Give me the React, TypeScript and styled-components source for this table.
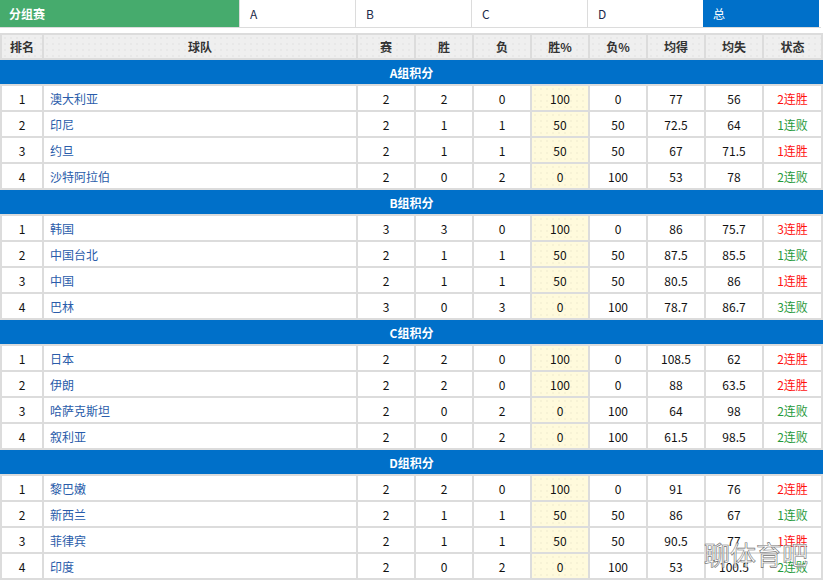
import { Fragment } from "react"
import styled, { createGlobalStyle } from "styled-components"

const GlobalStyle = createGlobalStyle`
  body {
    margin: 0;
    background: #fff;
    font-family: "Microsoft YaHei", "Noto Sans CJK SC", "Noto Sans", sans-serif;
    font-size: 12px;
    color: #222;
  }
`

const Page = styled.div`
  position: relative;
  width: 823px;
  height: 583px;
  overflow: hidden;
`

const TabBar = styled.div`
  display: flex;
  width: 821px;
  height: 27px;
  border-bottom: 1px solid #dcdcdc;
`

const Tab = styled.div<{ $kind?: "green" | "blue" }>`
  display: flex;
  align-items: center;
  box-sizing: border-box;
  width: ${(p) => (p.$kind === "green" ? "239px" : "116px")};
  padding-left: ${(p) => (p.$kind === "green" ? "9px" : "10px")};
  background: ${(p) =>
    p.$kind === "green" ? "#46ab6d" : p.$kind === "blue" ? "#0070c9" : "#fff"};
  color: ${(p) => (p.$kind ? "#fff" : "#1d2b4a")};
  font-weight: ${(p) => (p.$kind === "green" ? "bold" : "normal")};
  border-left: ${(p) => (p.$kind ? "none" : "1px solid #dcdcdc")};
  font-size: 12px;
`

const Table = styled.table`
  margin-top: 5px;
  width: 821px;
  table-layout: fixed;
  border-collapse: collapse;
`

const dots = `radial-gradient(circle, rgba(0,0,0,0.07) 0.6px, transparent 0.8px) 0 0 / 6px 6px`

const HeadCell = styled.th`
  height: 23px;
  padding: 0;
  border: 2px solid #dcdcdc;
  background: ${dots}, #efefef;
  font-weight: bold;
  color: #333;
  font-size: 12px;
  text-align: center;
`

const GroupCell = styled.td`
  height: 24px;
  padding: 0;
  border: 2px solid #dcdcdc;
  border-left-color: #0070c9;
  border-right-color: #0070c9;
  background: #0070c9;
  color: #fff;
  font-weight: bold;
  text-align: center;
`

const Cell = styled.td<{ $hl?: boolean }>`
  height: 24px;
  padding: 0;
  border: 2px solid #dcdcdc;
  text-align: center;
  color: #111;
  background: ${(p) => (p.$hl ? `${dots}, #fffadc` : "#fff")};
`

const TeamCell = styled(Cell)`
  text-align: left;
  padding-left: 6px;
  color: #2a5caa;
`

const Status = styled.span<{ $win: boolean }>`
  color: ${(p) => (p.$win ? "#ff1010" : "#1f9a3c")};
`

const Watermark = styled.div`
  position: absolute;
  left: 704px;
  top: 535px;
  font-size: 26px;
  color: rgba(255, 255, 255, 0.85);
  -webkit-text-stroke: 0.6px #707070;
  font-family: "Noto Sans CJK SC", sans-serif;
  pointer-events: none;
`

type Row = [string, number, number, number, number, number, string, string, string]

const groups: { name: string; rows: Row[] }[] = [
  {
    name: "A组积分",
    rows: [
      ["澳大利亚", 2, 2, 0, 100, 0, "77", "56", "2连胜"],
      ["印尼", 2, 1, 1, 50, 50, "72.5", "64", "1连败"],
      ["约旦", 2, 1, 1, 50, 50, "67", "71.5", "1连胜"],
      ["沙特阿拉伯", 2, 0, 2, 0, 100, "53", "78", "2连败"],
    ],
  },
  {
    name: "B组积分",
    rows: [
      ["韩国", 3, 3, 0, 100, 0, "86", "75.7", "3连胜"],
      ["中国台北", 2, 1, 1, 50, 50, "87.5", "85.5", "1连败"],
      ["中国", 2, 1, 1, 50, 50, "80.5", "86", "1连胜"],
      ["巴林", 3, 0, 3, 0, 100, "78.7", "86.7", "3连败"],
    ],
  },
  {
    name: "C组积分",
    rows: [
      ["日本", 2, 2, 0, 100, 0, "108.5", "62", "2连胜"],
      ["伊朗", 2, 2, 0, 100, 0, "88", "63.5", "2连胜"],
      ["哈萨克斯坦", 2, 0, 2, 0, 100, "64", "98", "2连败"],
      ["叙利亚", 2, 0, 2, 0, 100, "61.5", "98.5", "2连败"],
    ],
  },
  {
    name: "D组积分",
    rows: [
      ["黎巴嫩", 2, 2, 0, 100, 0, "91", "76", "2连胜"],
      ["新西兰", 2, 1, 1, 50, 50, "86", "67", "1连败"],
      ["菲律宾", 2, 1, 1, 50, 50, "90.5", "77", "1连胜"],
      ["印度", 2, 0, 2, 0, 100, "53", "100.5", "2连败"],
    ],
  },
]

const headers = ["排名", "球队", "赛", "胜", "负", "胜%", "负%", "均得", "均失", "状态"]
const widths = [42, 314, 58, 58, 58, 58, 58, 58, 58, 59]

export default function App() {
  return (
    <Page>
      <GlobalStyle />
      <TabBar>
        <Tab $kind="green">分组赛</Tab>
        <Tab>A</Tab>
        <Tab>B</Tab>
        <Tab>C</Tab>
        <Tab>D</Tab>
        <Tab $kind="blue">总</Tab>
      </TabBar>
      <Table>
        <colgroup>
          {widths.map((w, i) => (
            <col key={i} style={{ width: w }} />
          ))}
        </colgroup>
        <thead>
          <tr>
            {headers.map((h) => (
              <HeadCell key={h}>{h}</HeadCell>
            ))}
          </tr>
        </thead>
        <tbody>
          {groups.map((g) => (
            <Fragment key={g.name}>
              <tr>
                <GroupCell colSpan={10}>{g.name}</GroupCell>
              </tr>
              {g.rows.map((r, i) => (
                <tr key={r[0]}>
                  <Cell>{i + 1}</Cell>
                  <TeamCell>{r[0]}</TeamCell>
                  <Cell>{r[1]}</Cell>
                  <Cell>{r[2]}</Cell>
                  <Cell>{r[3]}</Cell>
                  <Cell $hl>{r[4]}</Cell>
                  <Cell>{r[5]}</Cell>
                  <Cell>{r[6]}</Cell>
                  <Cell>{r[7]}</Cell>
                  <Cell>
                    <Status $win={r[8].endsWith("胜")}>{r[8]}</Status>
                  </Cell>
                </tr>
              ))}
            </Fragment>
          ))}
        </tbody>
      </Table>
      <Watermark aria-hidden="true">聊体育吧</Watermark>
    </Page>
  )
}
